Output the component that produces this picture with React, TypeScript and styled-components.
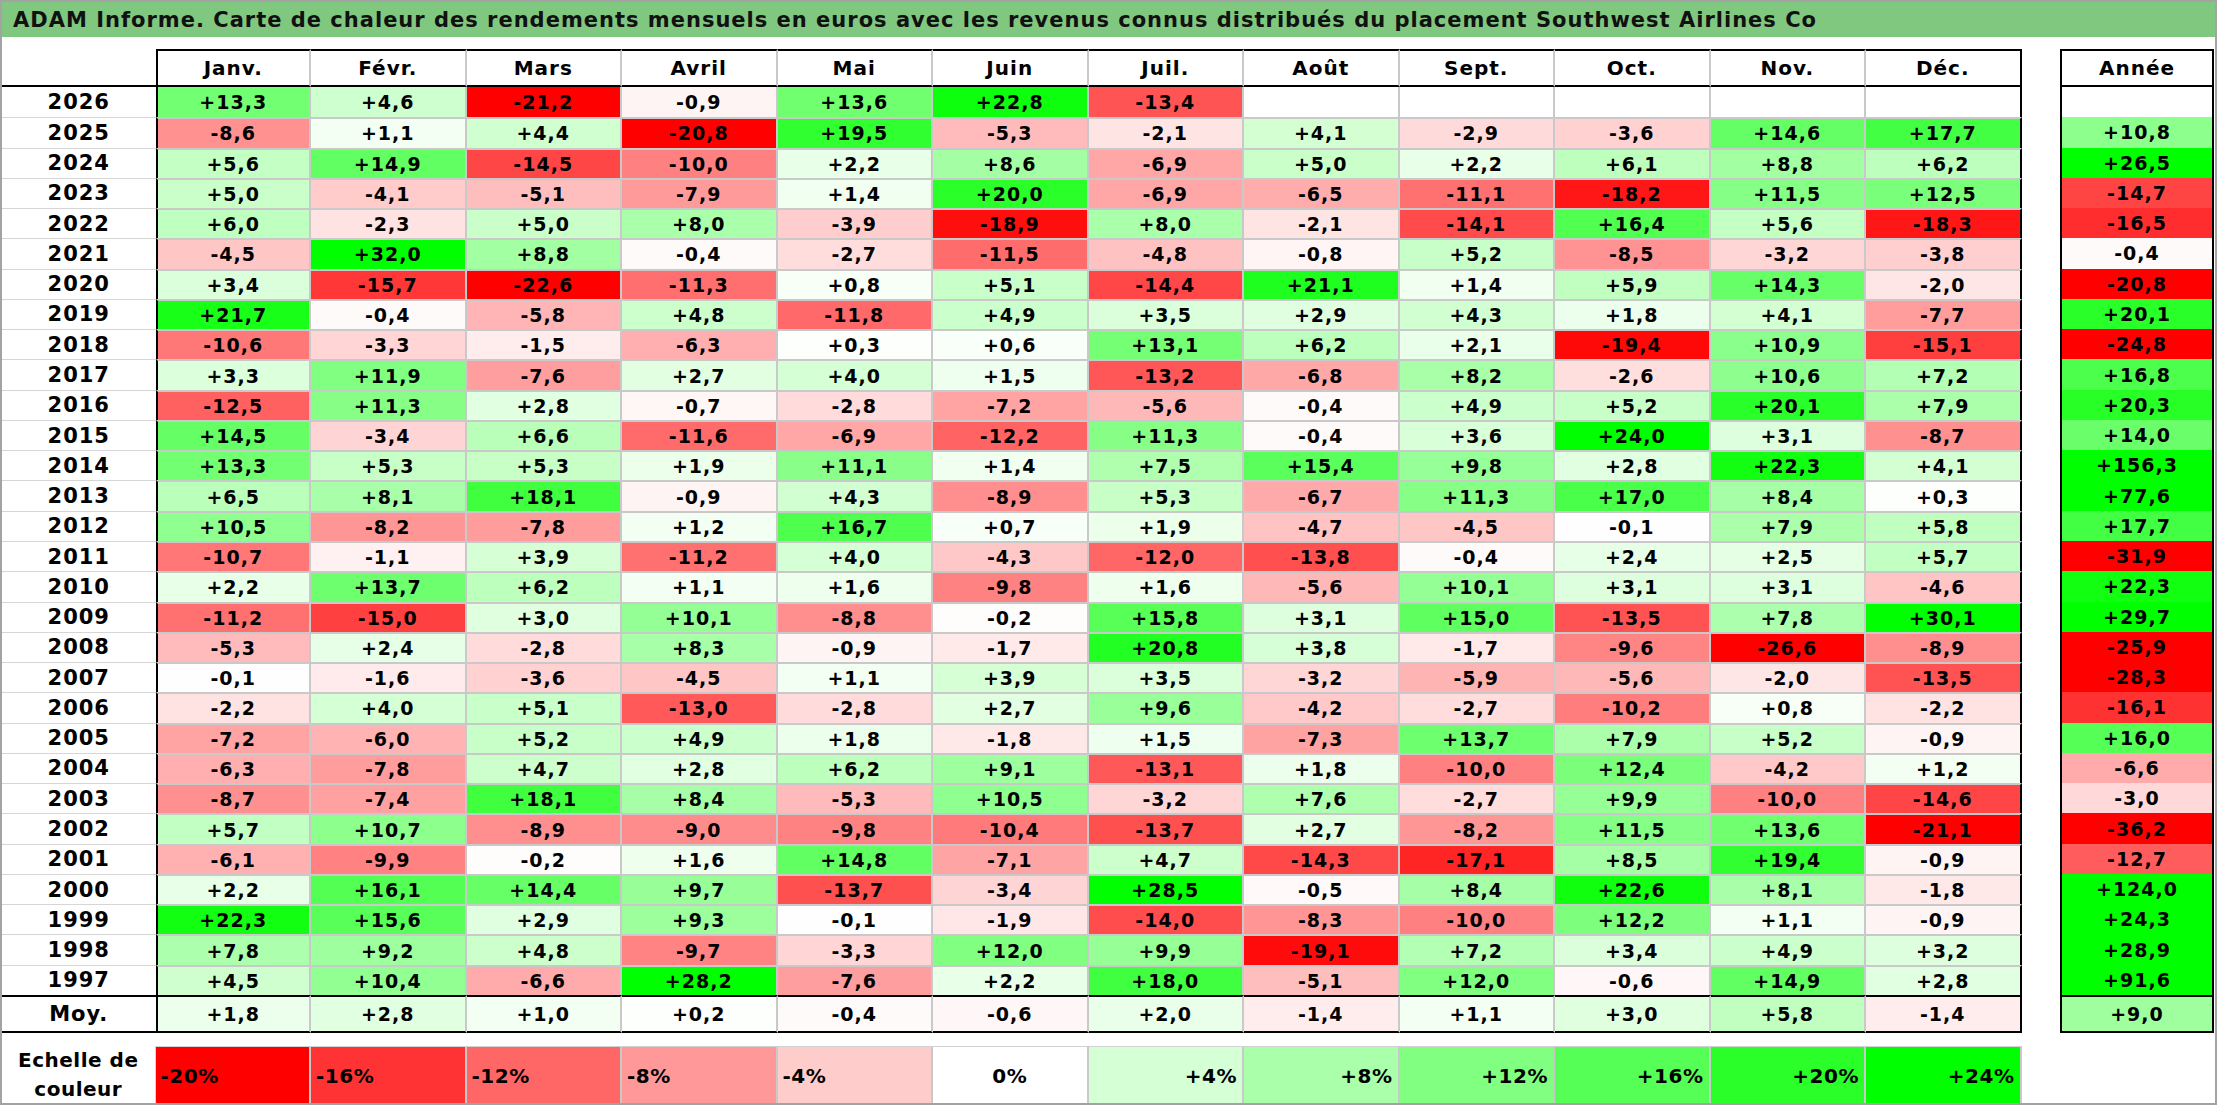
import React from "react";
import styled, { createGlobalStyle } from "styled-components";

const GlobalStyle = createGlobalStyle`
  html, body { margin: 0; padding: 0; background: #ffffff; }
  body { font-family: "DejaVu Sans", "Liberation Sans", sans-serif; }
  * { box-sizing: border-box; }
`;

type Row = { label: string; values: (number | null)[]; year: number | null };

const RAW: [string, string][] = [
  ["2026", "13.3 4.6 -21.2 -0.9 13.6 22.8 -13.4 x x x x x | x"],
  ["2025", "-8.6 1.1 4.4 -20.8 19.5 -5.3 -2.1 4.1 -2.9 -3.6 14.6 17.7 | 10.8"],
  ["2024", "5.6 14.9 -14.5 -10.0 2.2 8.6 -6.9 5.0 2.2 6.1 8.8 6.2 | 26.5"],
  ["2023", "5.0 -4.1 -5.1 -7.9 1.4 20.0 -6.9 -6.5 -11.1 -18.2 11.5 12.5 | -14.7"],
  ["2022", "6.0 -2.3 5.0 8.0 -3.9 -18.9 8.0 -2.1 -14.1 16.4 5.6 -18.3 | -16.5"],
  ["2021", "-4.5 32.0 8.8 -0.4 -2.7 -11.5 -4.8 -0.8 5.2 -8.5 -3.2 -3.8 | -0.4"],
  ["2020", "3.4 -15.7 -22.6 -11.3 0.8 5.1 -14.4 21.1 1.4 5.9 14.3 -2.0 | -20.8"],
  ["2019", "21.7 -0.4 -5.8 4.8 -11.8 4.9 3.5 2.9 4.3 1.8 4.1 -7.7 | 20.1"],
  ["2018", "-10.6 -3.3 -1.5 -6.3 0.3 0.6 13.1 6.2 2.1 -19.4 10.9 -15.1 | -24.8"],
  ["2017", "3.3 11.9 -7.6 2.7 4.0 1.5 -13.2 -6.8 8.2 -2.6 10.6 7.2 | 16.8"],
  ["2016", "-12.5 11.3 2.8 -0.7 -2.8 -7.2 -5.6 -0.4 4.9 5.2 20.1 7.9 | 20.3"],
  ["2015", "14.5 -3.4 6.6 -11.6 -6.9 -12.2 11.3 -0.4 3.6 24.0 3.1 -8.7 | 14.0"],
  ["2014", "13.3 5.3 5.3 1.9 11.1 1.4 7.5 15.4 9.8 2.8 22.3 4.1 | 156.3"],
  ["2013", "6.5 8.1 18.1 -0.9 4.3 -8.9 5.3 -6.7 11.3 17.0 8.4 0.3 | 77.6"],
  ["2012", "10.5 -8.2 -7.8 1.2 16.7 0.7 1.9 -4.7 -4.5 -0.1 7.9 5.8 | 17.7"],
  ["2011", "-10.7 -1.1 3.9 -11.2 4.0 -4.3 -12.0 -13.8 -0.4 2.4 2.5 5.7 | -31.9"],
  ["2010", "2.2 13.7 6.2 1.1 1.6 -9.8 1.6 -5.6 10.1 3.1 3.1 -4.6 | 22.3"],
  ["2009", "-11.2 -15.0 3.0 10.1 -8.8 -0.2 15.8 3.1 15.0 -13.5 7.8 30.1 | 29.7"],
  ["2008", "-5.3 2.4 -2.8 8.3 -0.9 -1.7 20.8 3.8 -1.7 -9.6 -26.6 -8.9 | -25.9"],
  ["2007", "-0.1 -1.6 -3.6 -4.5 1.1 3.9 3.5 -3.2 -5.9 -5.6 -2.0 -13.5 | -28.3"],
  ["2006", "-2.2 4.0 5.1 -13.0 -2.8 2.7 9.6 -4.2 -2.7 -10.2 0.8 -2.2 | -16.1"],
  ["2005", "-7.2 -6.0 5.2 4.9 1.8 -1.8 1.5 -7.3 13.7 7.9 5.2 -0.9 | 16.0"],
  ["2004", "-6.3 -7.8 4.7 2.8 6.2 9.1 -13.1 1.8 -10.0 12.4 -4.2 1.2 | -6.6"],
  ["2003", "-8.7 -7.4 18.1 8.4 -5.3 10.5 -3.2 7.6 -2.7 9.9 -10.0 -14.6 | -3.0"],
  ["2002", "5.7 10.7 -8.9 -9.0 -9.8 -10.4 -13.7 2.7 -8.2 11.5 13.6 -21.1 | -36.2"],
  ["2001", "-6.1 -9.9 -0.2 1.6 14.8 -7.1 4.7 -14.3 -17.1 8.5 19.4 -0.9 | -12.7"],
  ["2000", "2.2 16.1 14.4 9.7 -13.7 -3.4 28.5 -0.5 8.4 22.6 8.1 -1.8 | 124.0"],
  ["1999", "22.3 15.6 2.9 9.3 -0.1 -1.9 -14.0 -8.3 -10.0 12.2 1.1 -0.9 | 24.3"],
  ["1998", "7.8 9.2 4.8 -9.7 -3.3 12.0 9.9 -19.1 7.2 3.4 4.9 3.2 | 28.9"],
  ["1997", "4.5 10.4 -6.6 28.2 -7.6 2.2 18.0 -5.1 12.0 -0.6 14.9 2.8 | 91.6"],
];

const MOY = "1.8 2.8 1.0 0.2 -0.4 -0.6 2.0 -1.4 1.1 3.0 5.8 -1.4 | 9.0";

const parse = (label: string, s: string): Row => {
  const [m, y] = s.split("|");
  const conv = (t: string) => (t === "x" ? null : parseFloat(t));
  return {
    label,
    values: m.trim().split(/\s+/).map(conv),
    year: conv(y.trim()),
  };
};

const ROWS: Row[] = RAW.map(([l, s]) => parse(l, s));
const MOY_ROW: Row = parse("Moy.", MOY);

const MONTHS = [
  "Janv.", "Févr.", "Mars", "Avril", "Mai", "Juin",
  "Juil.", "Août", "Sept.", "Oct.", "Nov.", "Déc.",
];

const LEGEND = [-20, -16, -12, -8, -4, 0, 4, 8, 12, 16, 20, 24];

const colorFor = (v: number | null): string => {
  if (v === null) return "#ffffff";
  if (v < 0) {
    const c = Math.round(255 * (1 - Math.min(1, -v / 20)));
    return `rgb(255,${c},${c})`;
  }
  const c = Math.round(255 * (1 - Math.min(1, v / 24)));
  return `rgb(${c},255,${c})`;
};

const fmt = (v: number | null): string => {
  if (v === null) return "";
  const sign = v < 0 ? "-" : "+";
  return sign + Math.abs(v).toFixed(1).replace(".", ",");
};

/* ---------- layout ---------- */

const Page = styled.div`
  width: 2217px;
  height: 1105px;
  border: 2px solid #a3a3a3;
  display: flex;
  flex-direction: column;
  overflow: hidden;
  background: #ffffff;
`;

const TitleBar = styled.div`
  height: 35px;
  flex: none;
  background: #80c880;
  display: flex;
  align-items: center;
  padding-left: 11px;
  font-family: "DejaVu Sans", sans-serif;
  font-weight: bold;
  font-size: 21px;
  letter-spacing: 1px;
  color: #111111;
  white-space: nowrap;
`;

const Body = styled.div`
  padding-top: 12px;
  display: flex;
  flex-direction: column;
`;

const TableRow = styled.div`
  display: flex;
  align-items: flex-start;
`;

const MainGrid = styled.div`
  display: grid;
  grid-template-columns: 153.5px repeat(12, 155.5px);
  grid-template-rows: 38px repeat(30, 1fr) 38px;
  height: 984px;
`;

const textStyle = `
  font-family: "DejaVu Sans", sans-serif;
  font-weight: bold;
  font-size: 19px;
  letter-spacing: 1px;
  color: #000000;
  display: flex;
  align-items: center;
  justify-content: center;
  white-space: nowrap;
`;

const Corner = styled.div`
  border-bottom: 2px solid #000000;
`;

const MonthHead = styled.div<{ $first: boolean; $last: boolean }>`
  ${textStyle}
  font-size: 20px;
  border-top: 2px solid #000000;
  border-bottom: 2px solid #000000;
  border-left: ${(p) => (p.$first ? "2px solid #000000" : "none")};
  border-right: 2px solid ${(p) => (p.$last ? "#000000" : "#c9c9c9")};
  background: #ffffff;
`;

const YearCell = styled.div<{ $moy: boolean; $firstRow: boolean }>`
  ${textStyle}
  font-size: 21px;
  border-top: ${(p) =>
    p.$moy ? "2px solid #000000" : p.$firstRow ? "none" : "1px solid #d6d6d6"};
  border-bottom: ${(p) => (p.$moy ? "2px solid #000000" : "none")};
`;

const ValueCell = styled.div<{
  $bg: string;
  $first: boolean;
  $last: boolean;
  $moy: boolean;
  $firstRow: boolean;
}>`
  ${textStyle}
  background: ${(p) => p.$bg};
  border-left: ${(p) => (p.$first ? "2px solid #000000" : "none")};
  border-right: 2px solid ${(p) => (p.$last ? "#000000" : "#c9c9c9")};
  border-top: ${(p) =>
    p.$moy ? "2px solid #000000" : p.$firstRow ? "none" : "2px solid #c9c9c9"};
  border-bottom: ${(p) => (p.$moy ? "2px solid #000000" : "none")};
`;

const YearBox = styled.div`
  margin-left: 38.5px;
  width: 154px;
  height: 984px;
  border: 2px solid #000000;
  display: grid;
  grid-template-rows: 36px repeat(30, 1fr) 36px;
`;

const YearHead = styled.div`
  ${textStyle}
  font-size: 20px;
  border-bottom: 2px solid #000000;
`;

const YearValue = styled.div<{ $bg: string; $moy: boolean }>`
  ${textStyle}
  background: ${(p) => p.$bg};
  border-top: ${(p) => (p.$moy ? "2px solid #000000" : "none")};
`;

const Legend = styled.div`
  margin-top: 13px;
  height: 57px;
  display: grid;
  grid-template-columns: 153.5px repeat(12, 155.5px);
`;

const LegendLabel = styled.div`
  ${textStyle}
  flex-direction: column;
  line-height: 29px;
  font-size: 20px;
  letter-spacing: 0.5px;
  border-right: 1px solid #d6d6d6;
`;

const LegendCell = styled.div<{ $bg: string; $align: string }>`
  ${textStyle}
  font-size: 20px;
  letter-spacing: 0.5px;
  justify-content: ${(p) => p.$align};
  padding: 0 5px;
  background: ${(p) => p.$bg};
  border-top: 1px solid #d2d2d2;
  border-right: 2px solid #c9c9c9;
`;

const legendText = (v: number) =>
  v === 0 ? "0%" : `${v > 0 ? "+" : ""}${v}%`;

const legendAlign = (v: number) =>
  v < 0 ? "flex-start" : v === 0 ? "center" : "flex-end";

export default function App() {
  const allRows = [...ROWS, MOY_ROW];
  return (
    <>
      <GlobalStyle />
      <Page>
        <TitleBar>
          ADAM Informe. Carte de chaleur des rendements mensuels en euros avec les revenus connus distribués du placement Southwest Airlines Co
        </TitleBar>
        <Body>
          <TableRow>
            <MainGrid>
              <Corner />
              {MONTHS.map((m, i) => (
                <MonthHead key={m} $first={i === 0} $last={i === 11}>
                  {m}
                </MonthHead>
              ))}
              {allRows.map((r, ri) => {
                const moy = ri === allRows.length - 1;
                return (
                  <React.Fragment key={r.label}>
                    <YearCell $moy={moy} $firstRow={ri === 0}>
                      {r.label}
                    </YearCell>
                    {r.values.map((v, ci) => (
                      <ValueCell
                        key={ci}
                        $bg={colorFor(v)}
                        $first={ci === 0}
                        $last={ci === 11}
                        $moy={moy}
                        $firstRow={ri === 0}
                      >
                        {fmt(v)}
                      </ValueCell>
                    ))}
                  </React.Fragment>
                );
              })}
            </MainGrid>
            <YearBox>
              <YearHead>Année</YearHead>
              {allRows.map((r, ri) => (
                <YearValue
                  key={r.label}
                  $bg={colorFor(r.year)}
                  $moy={ri === allRows.length - 1}
                >
                  {fmt(r.year)}
                </YearValue>
              ))}
            </YearBox>
          </TableRow>
          <Legend>
            <LegendLabel>
              <span>Echelle de</span>
              <span>couleur</span>
            </LegendLabel>
            {LEGEND.map((v) => (
              <LegendCell key={v} $bg={colorFor(v)} $align={legendAlign(v)}>
                {legendText(v)}
              </LegendCell>
            ))}
          </Legend>
        </Body>
      </Page>
    </>
  );
}
